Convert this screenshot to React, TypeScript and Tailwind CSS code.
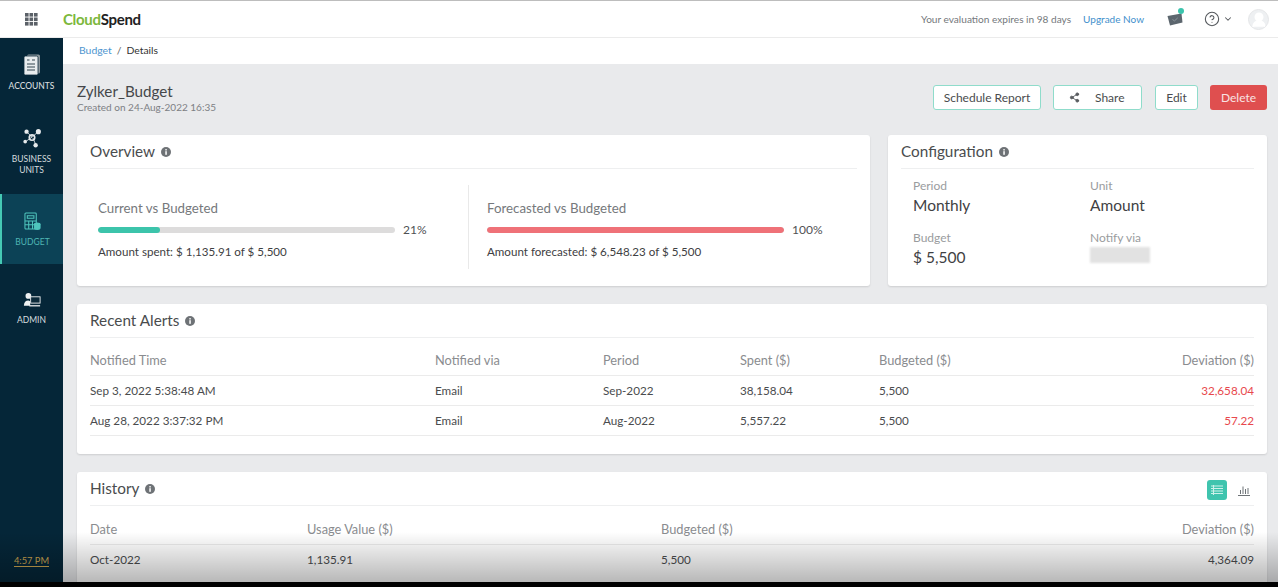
import type { ReactNode } from 'react';
import { ChevronDown, CircleHelp, Share2, UserRound } from 'lucide-react';

const lato = { fontFamily: 'Lato, "Noto Sans", sans-serif' };

function AppsIcon() {
  return (
    <svg width="13" height="13" viewBox="0 0 13 13" fill="#5b6168">
      {[0, 4.5, 9].map((y) =>
        [0, 4.5, 9].map((x) => <rect key={`${x}-${y}`} x={x} y={y} width="3.6" height="3.6" />),
      )}
    </svg>
  );
}

function AccountsIcon() {
  return (
    <svg width="18" height="22" viewBox="0 0 18 22">
      <rect x="4" y="0.5" width="13" height="19" rx="1.5" fill="#8c979d" />
      <rect x="1" y="2" width="14" height="19" rx="1.5" fill="#e8ecee" stroke="#0b2a3a" strokeWidth="0.8" />
      <path d="M4 6h2.5M9 6h3M4 10h8M4 13h8M4 16h8" stroke="#33444e" strokeWidth="1.2" />
    </svg>
  );
}

function UnitsIcon() {
  return (
    <svg width="20" height="20" viewBox="0 0 22 22" fill="#e6eaec">
      <path d="M5 4l6 6M18 4l-7 6M4 15l7-5M12 11l3 7" stroke="#e6eaec" strokeWidth="0.9" />
      <circle cx="11" cy="10.5" r="3" fill="none" stroke="#e6eaec" strokeWidth="1.8" />
      <circle cx="5" cy="4" r="2.4" />
      <circle cx="18" cy="4" r="2.8" />
      <circle cx="3.5" cy="15" r="2" />
      <circle cx="15" cy="19" r="2.4" />
    </svg>
  );
}

function BudgetIcon() {
  return (
    <svg width="17" height="19" viewBox="0 0 18 20" fill="none" stroke="#4fc5bd" strokeWidth="1.1">
      <rect x="1" y="1" width="12" height="17" rx="1" />
      <path d="M3.5 4h7v2.5h-7zM1 9.5h12M1 13.5h12M5 9.5V18M9 9.5V18" />
      <ellipse cx="14" cy="13" rx="3" ry="1.3" fill="#4fc5bd" />
      <path d="M11 13v4c0 .8 1.4 1.4 3 1.4s3-.6 3-1.4v-4" fill="#4fc5bd" />
    </svg>
  );
}

function AdminIcon() {
  return (
    <svg width="18" height="15" viewBox="0 0 20 16">
      <circle cx="6" cy="4" r="3.2" fill="#eef1f2" />
      <path d="M1 15c0-4 2-6 5-6l2 1v5z" fill="#eef1f2" />
      <rect x="8.5" y="5" width="10.5" height="7" fill="#0b2a3a" stroke="#eef1f2" strokeWidth="1" />
      <path d="M7 15h12" stroke="#eef1f2" strokeWidth="1.4" />
    </svg>
  );
}

function ChatIcon() {
  return (
    <span className="relative ml-[23px] block h-[15px] w-[16px]">
      <svg width="16" height="15" viewBox="0 0 16 15">
        <path d="M0.5 4L14.5 1.5L15.5 10.5L3 13.5z" fill="#5c666e" />
        <path d="M5.5 7.5l2 1.4 3.2-3" fill="none" stroke="#8a939a" strokeWidth="1" />
      </svg>
      <span className="absolute -right-[1px] -top-[4px] h-[6px] w-[6px] rounded-full bg-[#3cc4ad]" />
    </span>
  );
}

function InfoDot() {
  return (
    <svg width="10" height="10" viewBox="0 0 10 10" className="mt-[2px]">
      <circle cx="5" cy="5" r="5" fill="#6e7276" />
      <rect x="4.3" y="4.2" width="1.5" height="3.6" fill="#fff" />
      <rect x="4.3" y="2.1" width="1.5" height="1.4" fill="#fff" />
    </svg>
  );
}

function NavItem({ icon, label, active, className }: { icon: ReactNode; label: ReactNode; active?: boolean; className: string }) {
  return (
    <div
      className={`flex flex-col items-center text-[8.5px] leading-[11px] text-center ${
        active ? 'bg-[#0c4256] text-[#4fb6b4] border-l-2 border-[#45c9b4]' : 'text-[#d5dcdf]'
      } ${className}`}
    >
      {icon}
      {label}
    </div>
  );
}

function CardTitle({ children, right }: { children: ReactNode; right?: ReactNode }) {
  return (
    <div className="flex h-[34px] items-center justify-between border-b border-[#eeeff0]">
      <div className="flex items-center gap-[6px] pb-[1px] text-[15.3px] text-[#4a4c4e]">
        {children}
        <InfoDot />
      </div>
      {right}
    </div>
  );
}

function Progress({ title, pct, fill, width, text }: { title: string; pct: string; fill: string; width: string; text: string }) {
  return (
    <div>
      <div className="text-[13.3px] leading-[18px] text-[#76797c]">{title}</div>
      <div className="mt-[4px] flex items-center gap-[8px]">
        <div className="h-[6px] w-[297px] overflow-hidden rounded-full bg-[#dddcdc]">
          <div className={`h-full rounded-full ${fill} ${width}`} />
        </div>
        <span className="text-[12px] text-[#4f5154]">{pct}</span>
      </div>
      <div className="mt-[4px] text-[11.6px] leading-[18px] text-[#3e4042]">{text}</div>
    </div>
  );
}

function ConfigField({ label, value }: { label: string; value: ReactNode }) {
  return (
    <div>
      <div className="text-[12px] leading-[15px] text-[#9a9c9e]">{label}</div>
      <div className="mt-[1px] h-[22px] text-[15.5px] leading-[22px] text-[#3f4143]">{value}</div>
    </div>
  );
}

const alerts = [
  ['Sep 3, 2022 5:38:48 AM', 'Email', 'Sep-2022', '38,158.04', '5,500', '32,658.04'],
  ['Aug 28, 2022 3:37:32 PM', 'Email', 'Aug-2022', '5,557.22', '5,500', '57.22'],
];

export default function App() {
  return (
    <div style={lato} className="relative flex h-[587px] w-[1278px] flex-col overflow-hidden bg-[#e9eaec]">
      {/* 상단 바 */}
      <header className="flex h-[38px] shrink-0 items-center border-t border-b border-t-[#bdbdbd] border-b-[#ebebeb] bg-white pl-[25px] pr-[9px]">
        <AppsIcon />
        <div className="ml-[25px] text-[15px] font-bold tracking-[-0.3px] text-[#222]">
          <span className="text-[#7cb83c]">Cloud</span>Spend
        </div>
        <div className="ml-auto flex items-center">
          <span className="pt-[1px] text-[10.1px] text-[#74787c]">Your evaluation expires in 98 days</span>
          <span className="ml-[12px] pt-[1px] text-[10px] text-[#3f8fcc]">Upgrade Now</span>
          <ChatIcon />
          <CircleHelp size={16} strokeWidth={1.6} className="ml-[21px] text-[#55595d]" />
          <ChevronDown size={10} strokeWidth={2.5} className="ml-[3px] text-[#55595d]" />
          <span className="ml-[15px] flex h-[21px] w-[21px] items-end justify-center overflow-hidden rounded-full border border-[#e5e6e8] bg-[#eef0f2]">
            <UserRound size={18} fill="#fff" stroke="#fff" />
          </span>
        </div>
      </header>

      <div className="flex min-h-0 flex-1">
        <aside className="flex w-[63px] shrink-0 flex-col bg-[#052638]">
          <NavItem className="h-[86px] pt-[16px] gap-[5px] font-medium" icon={<AccountsIcon />} label="ACCOUNTS" />
          <NavItem
            className="h-[70px] pt-[4px] gap-[6px]"
            icon={<UnitsIcon />}
            label={<>BUSINESS<br />UNITS</>}
          />
          <NavItem className="h-[70px] pt-[18px] gap-[6px]" active icon={<BudgetIcon />} label="BUDGET" />
          <NavItem className="h-[70px] pt-[28px] gap-[8px]" icon={<AdminIcon />} label="ADMIN" />
          <div className="mt-auto pb-[20px] text-center text-[9.3px] leading-[12px] text-[#c9a24e]">
            <span className="border-b border-[#c9a24e]">4:57 PM</span>
          </div>
        </aside>

        <main className="min-w-0 flex-1">
          <nav className="flex h-[26px] items-center gap-[5px] bg-white pb-[1px] pl-[16px] text-[10.4px]">
            <span className="text-[#4d94cf]">Budget</span>
            <span className="text-[#666]">/</span>
            <span className="text-[#333]">Details</span>
          </nav>

          <div className="pl-[14px] pr-[11px]">
            <div className="flex h-[71px] items-start justify-between pt-[17px]">
              <div>
                <h1 className="text-[15.2px] leading-[20px] text-[#45474a]">Zylker_Budget</h1>
                <p className="text-[10px] leading-[13px] text-[#7d8084]">Created on 24-Aug-2022 16:35</p>
              </div>
              <div className="flex items-center gap-[12px] pt-[4px] text-[12px] text-[#4a4c4e]">
                <button className="h-[25px] w-[108px] rounded-[3px] border border-[#8fdccb] bg-white">Schedule Report</button>
                <button className="flex h-[25px] w-[89px] items-center rounded-[3px] border border-[#8fdccb] bg-white pl-[15px]">
                  <Share2 size={11} fill="currentColor" className="text-[#5a5d60]" />
                  <span className="ml-[15px]">Share</span>
                </button>
                <button className="ml-[1px] h-[25px] w-[43px] rounded-[3px] border border-[#8fdccb] bg-white">Edit</button>
                <button className="h-[25px] w-[57px] rounded-[3px] bg-[#df4f4f] text-[#f8e3e3]">Delete</button>
              </div>
            </div>

            <div className="flex gap-[18px]">
              <section className="h-[151px] w-[793px] rounded-[3px] bg-white px-[13px] shadow-[0_1px_2px_rgba(0,0,0,0.12)]">
                <CardTitle>Overview</CardTitle>
                <div className="mt-[16px] flex h-[84px]">
                  <div className="w-[379px] border-r border-[#e9e9e9] pl-[8px] pt-[14px]">
                    <Progress
                      title="Current vs Budgeted"
                      pct="21%"
                      fill="bg-[#3cc4ab]"
                      width="w-[21%]"
                      text="Amount spent: $ 1,135.91 of $ 5,500"
                    />
                  </div>
                  <div className="pl-[18px] pt-[14px]">
                    <Progress
                      title="Forecasted vs Budgeted"
                      pct="100%"
                      fill="bg-[#ef7178]"
                      width="w-full"
                      text="Amount forecasted: $ 6,548.23 of $ 5,500"
                    />
                  </div>
                </div>
              </section>

              <section className="h-[151px] flex-1 rounded-[3px] bg-white px-[13px] shadow-[0_1px_2px_rgba(0,0,0,0.12)]">
                <CardTitle>Configuration</CardTitle>
                <div className="mt-[9px] grid grid-cols-[177px_1fr] gap-y-[14px] pl-[12px]">
                  <ConfigField label="Period" value="Monthly" />
                  <ConfigField label="Unit" value="Amount" />
                  <ConfigField label="Budget" value="$ 5,500" />
                  <ConfigField label="Notify via" value={<span className="mt-[2px] block h-[16px] w-[60px] bg-[#e2e2e2] blur-[1px]" />} />
                </div>
              </section>
            </div>

            <section className="mt-[18px] h-[150px] rounded-[3px] bg-white px-[13px] shadow-[0_1px_2px_rgba(0,0,0,0.12)]">
              <CardTitle>Recent Alerts</CardTitle>
              <div className="mt-[8px] text-[11.7px]">
                <div className="grid h-[30px] grid-cols-[345px_168px_137px_139px_1fr] items-center border-b border-[#ebebeb] text-[12.8px] text-[#8a8c8f]">
                  <span>Notified Time</span>
                  <span>Notified via</span>
                  <span>Period</span>
                  <span>Spent ($)</span>
                  <span className="flex justify-between"><span>Budgeted ($)</span><span>Deviation ($)</span></span>
                </div>
                {alerts.map((row) => (
                  <div key={row[0]} className="grid h-[30px] grid-cols-[345px_168px_137px_139px_1fr] items-center border-b border-[#ebebeb] text-[#4a4c4e]">
                    <span>{row[0]}</span>
                    <span>{row[1]}</span>
                    <span>{row[2]}</span>
                    <span>{row[3]}</span>
                    <span className="flex justify-between"><span>{row[4]}</span><span className="text-[#e8484d]">{row[5]}</span></span>
                  </div>
                ))}
              </div>
            </section>

            <section className="mt-[18px] h-[130px] rounded-[3px] bg-white px-[13px] shadow-[0_1px_2px_rgba(0,0,0,0.12)]">
              <CardTitle
                right={
                  <div className="mt-[3px] flex items-center gap-[11px]">
                    <span className="flex h-[20px] w-[20px] items-center justify-center rounded-[3px] bg-[#3fc4ae]">
                      <svg width="12" height="11" viewBox="0 0 12 11" fill="none" stroke="#cdf1ea" strokeWidth="1.1">
                        <path d="M0 1h12M0 3.5h12M0 6h12M0 8.5h12M2.5 0v10" />
                      </svg>
                    </span>
                    <svg width="12" height="11" viewBox="0 0 12 11" fill="none" stroke="#6d7276" strokeWidth="1" className="mr-[4px]">
                      <path d="M0 10.5h12M2.5 9V5M5 9V1.5M7.5 9V4M10 9V3" />
                    </svg>
                  </div>
                }
              >
                History
              </CardTitle>
              <div className="mt-[9px] text-[11.7px]">
                <div className="flex h-[30px] items-center border-b border-[#ebebeb] text-[12.8px] text-[#8a8c8f]">
                  <span className="w-[217px]">Date</span>
                  <span className="w-[354px]">Usage Value ($)</span>
                  <span>Budgeted ($)</span>
                  <span className="ml-auto">Deviation ($)</span>
                </div>
                <div className="flex h-[30px] items-center text-[#4a4c4e]">
                  <span className="w-[217px]">Oct-2022</span>
                  <span className="w-[354px]">1,135.91</span>
                  <span>5,500</span>
                  <span className="ml-auto">4,364.09</span>
                </div>
              </div>
            </section>
          </div>
        </main>
      </div>

      {/* 영상 하단 그라데이션 + 검은 띠 */}
      <div className="pointer-events-none absolute inset-x-0 bottom-[5px] h-[50px] bg-gradient-to-b from-transparent to-[rgba(0,0,0,0.28)]" />
      <div className="absolute inset-x-0 bottom-0 h-[5px] bg-black" />
    </div>
  );
}
